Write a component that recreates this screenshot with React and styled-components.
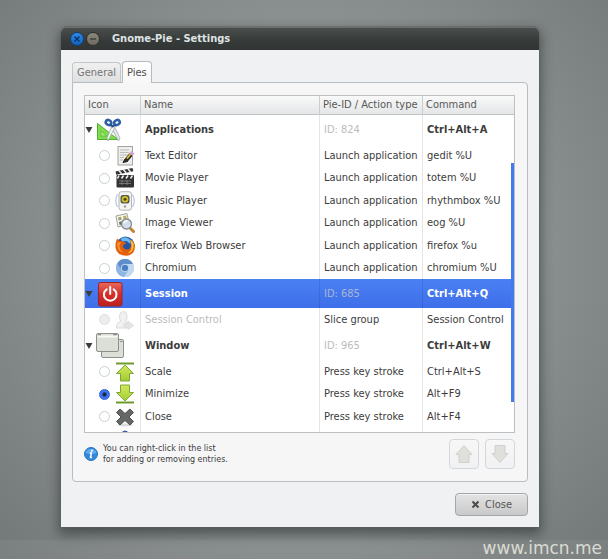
import React, { useState } from 'react';
import styled, { createGlobalStyle } from 'styled-components';

const GlobalStyle = createGlobalStyle`
  * {
    box-sizing: border-box;
  }

  body {
    margin: 0;
    font-family: 'DejaVu Sans Condensed', 'Noto Sans', sans-serif;
    font-size: 11px;
    line-height: 14px;
    color: #3c3c3c;
  }

  button {
    font: inherit;
    color: inherit;
    padding: 0;
  }
`;

const Desktop = styled.div`
  position: relative;
  display: flex;
  height: 100vh;
  min-height: 480px;
  padding: 27px 69px 32px 61px;
  background:
    linear-gradient(transparent calc(100% - 20px), rgba(255, 255, 255, 0.06) calc(100% - 18px)),
    radial-gradient(ellipse at 50% 45%, #989c9c 0%, #8a8f8f 55%, #727777 100%);
`;

const Window = styled.main`
  flex: 1;
  min-width: 0;
  display: flex;
  flex-direction: column;
  border-radius: 5px 5px 0 0;
  background: #f0f1f2;
  box-shadow: 0 0 0 1px rgba(90, 95, 95, 0.5), 0 5px 12px 2px rgba(25, 30, 30, 0.5);
`;

const TitleBar = styled.header`
  display: flex;
  align-items: center;
  height: 23px;
  padding: 0 9px;
  gap: 2px;
  border-radius: 5px 5px 0 0;
  background: linear-gradient(#4b504e, #363b39 60%, #303533);
  box-shadow: inset 0 1px 0 #6a6f6d;
`;

const WindowButton = styled.button`
  display: flex;
  width: 14px;
  height: 14px;
  border: 1px solid ${props => (props.$close ? '#123f77' : '#2f302b')};
  border-radius: 50%;
  background: ${props => (props.$close ? 'linear-gradient(#2f8ae6, #1163bd)' : 'linear-gradient(#8d887b, #6c695f)')};
`;

const Title = styled.h1`
  margin: 0 0 0 10px;
  font-size: 11px;
  font-weight: 700;
  color: #dfe3e3;
`;

const Content = styled.div`
  flex: 1;
  min-height: 0;
  display: flex;
  flex-direction: column;
  padding: 11px;
`;

const TabList = styled.div`
  display: flex;
  align-items: flex-end;
  gap: 1px;
  z-index: 1;
`;

const Tab = styled.button`
  height: ${props => (props.$active ? '22px' : '20px')};
  margin-bottom: ${props => (props.$active ? '-1px' : '0')};
  padding: 0 4px;
  border: 1px solid ${props => (props.$active ? '#b4babe' : '#c3c7ca')};
  border-bottom: 0;
  border-radius: 4px 4px 0 0;
  background: ${props => (props.$active ? 'linear-gradient(#ffffff, #f7f7f7)' : 'linear-gradient(#f0f0f0, #dfe0e1)')};
  color: ${props => (props.$active ? '#4c4c4c' : '#747474')};
`;

const Panel = styled.section`
  flex: 1;
  min-height: 0;
  display: flex;
  flex-direction: column;
  padding: 12px 12px 12px 11px;
  border: 1px solid #b7bdc1;
  border-radius: 0 4px 4px 4px;
  background: #f6f6f6;
`;

const ListFrame = styled.div`
  position: relative;
  flex: 1;
  min-height: 0;
  overflow: hidden;
  border: 1px solid #bcc0c3;
  background: #fff;
`;

const ScrollThumb = styled.div`
  position: absolute;
  top: 20%;
  right: 0;
  width: 3px;
  height: 71%;
  background: #4479f2;
`;

const Table = styled.table`
  width: 100%;
  table-layout: fixed;
  border-collapse: separate;
  border-spacing: 0;
`;

const Col = styled.col`
  width: ${props => props.$width};
`;

const HeadCell = styled.th`
  height: 19px;
  padding: 0 2px 0 3px;
  border-right: 1px solid #cbced0;
  border-bottom: 1px solid #bfc3c6;
  background: linear-gradient(#f9f9f9, #e4e6e7);
  color: #585858;
  font-weight: 400;
  text-align: left;
  white-space: nowrap;

  &:last-child {
    border-right: 0;
  }
`;

const Cell = styled.td`
  padding: 0 2px 0 4px;
  border-right: 1px solid rgba(0, 0, 0, 0.1);
  white-space: nowrap;
  color: ${props => (props.$faded ? '#bcbcbc' : 'inherit')};

  &:last-child {
    border-right: 0;
  }
`;

const IconCell = styled(Cell)`
  padding: 0;
`;

const GroupRow = styled.tr`
  height: 29px;
  font-weight: 700;
  color: ${props => (props.$selected ? '#fff' : 'inherit')};
  background: ${props => (props.$selected ? 'linear-gradient(#4a80f4, #3e6fe9)' : 'none')};

  ${Cell}:nth-child(3) {
    font-weight: 400;
    color: ${props => (props.$selected ? '#a9b6d0' : '#bcbcbc')};
  }
`;

const ItemRow = styled.tr`
  height: 22px;

  &:nth-child(even) {
    height: 23px;
  }
`;

const IconBox = styled.div`
  display: flex;
  align-items: center;
  height: ${props => (props.$group ? '28px' : '22px')};
  gap: ${props => (props.$group ? '3px' : '5px')};
  padding-left: ${props => (props.$group ? '0' : '14px')};

  svg {
    flex: none;
    display: block;
  }
`;

const Expander = styled.button`
  display: flex;
  width: 8px;
  border: 0;
  background: none;
`;

const Radio = styled.input`
  appearance: none;
  flex: none;
  width: 11px;
  height: 11px;
  margin: 0;
  border: 1px solid #c9cfcf;
  border-radius: 50%;
  background: #fff;

  &:disabled {
    border-color: #dedfdf;
    background: #ededed;
  }

  &:checked {
    border-color: #2c5fd8;
    background: radial-gradient(circle, #16233f 0 1px, #3f74ee 3px);
  }
`;

const PanelFooter = styled.div`
  display: flex;
  align-items: center;
  gap: 6px;
  padding-top: 6px;
`;

const Hint = styled.p`
  flex: 1;
  display: flex;
  align-items: center;
  gap: 5px;
  margin: 0;
  font-family: 'DejaVu Sans', sans-serif;
  font-size: 8px;
  line-height: 11px;
`;

const MoveButton = styled.button`
  display: flex;
  align-items: center;
  justify-content: center;
  width: 30px;
  height: 30px;
  border: 1px solid #d3d7da;
  border-radius: 4px;
  background: linear-gradient(#f7f7f7, #f0f1f2);
`;

const Actions = styled.div`
  display: flex;
  justify-content: flex-end;
  padding-top: 11px;
`;

const CloseButton = styled.button`
  display: flex;
  align-items: center;
  justify-content: center;
  gap: 5px;
  width: 73px;
  height: 23px;
  border: 1px solid #a3a6a8;
  border-radius: 4px;
  background: linear-gradient(#e3e3e3, #c9c9c9);
  box-shadow: inset 0 1px 0 #f2f2f2;
  color: #555;
`;

const Watermark = styled.div`
  position: absolute;
  right: 6px;
  bottom: 0;
  font-family: 'DejaVu Sans', sans-serif;
  font-size: 17px;
  line-height: 22px;
  color: #dadcd3;
`;

const ApplicationsIcon = () => (
  <svg width="28" height="24" viewBox="0 0 28 24">
    <path d="M1.5 5.500V21.500H22z" fill="#7fdb4f" stroke="#4fae2c" />
    <path d="M5 13v5h6z" fill="#a6ef7c" stroke="#55b531" strokeWidth=".7" />
    <path d="M14.500 8l3-1 6.500 13-1.500 3z" fill="#e6e8ea" stroke="#989da1" strokeWidth=".7" />
    <path d="M19.500 8l-3-1-5.500 13 1 3z" fill="#f7f8f8" stroke="#989da1" strokeWidth=".7" />
    <g fill="none" stroke="#2d5fa6" strokeWidth="2.600">
      <ellipse cx="12.500" cy="4.500" rx="2.800" ry="2.400" transform="rotate(25 12.500 4.500)" />
      <ellipse cx="21" cy="4.500" rx="2.800" ry="2.400" transform="rotate(-25 21 4.500)" />
    </g>
    <path d="M14.500 6.500l2.300 2 2.300-2" fill="none" stroke="#244f8b" strokeWidth="2" />
  </svg>
);

const SessionIcon = () => (
  <svg width="28" height="26" viewBox="0 0 28 26">
    <defs>
      <linearGradient id="session" x1="0" y1="0" x2="0" y2="1">
        <stop offset="0" stopColor="#e8685c" />
        <stop offset=".5" stopColor="#d3302a" />
        <stop offset="1" stopColor="#bd1f1f" />
      </linearGradient>
    </defs>
    <rect x="2.500" y="1.500" width="23.500" height="23.500" rx="2" fill="url(#session)" stroke="#9c2226" />
    <path d="M10.700 8.300a6.300 6.300 0 1 0 7 0M14.200 6v7" fill="none" stroke="#fff" strokeWidth="2" strokeLinecap="round" />
  </svg>
);

const WindowIcon = () => (
  <svg width="29" height="27" viewBox="0 0 29 27">
    <g fill="#dcded8" stroke="#8e918b">
      <rect x="5.500" y="7.500" width="22" height="18" rx="1.500" />
      <rect x=".5" y="1.500" width="22" height="18" rx="1.500" />
    </g>
    <path d="M1.500 4.500h20" stroke="#f8f8f6" strokeWidth="2" />
    <path d="M2 2.700h3M17 2.700h4" stroke="#7d807a" />
    <path d="M24 9.500h2.500" stroke="#8e918b" />
  </svg>
);

const EditorIcon = () => (
  <svg width="20" height="20" viewBox="0 0 20 20">
    <rect x="3" y=".5" width="14.500" height="18.500" fill="#eeeeec" stroke="#a3a5a1" />
    <path d="M5 4h9M5 6.500h9M5 9h8M5 11.500h4M5 14h3" stroke="#bbbdb9" />
    <path d="M8 16.500l2-3.500 2.500 2.500z" fill="#333" stroke="#222" />
    <path d="M11 14.500l5-6" stroke="#2e2c22" strokeWidth="4" />
    <path d="M12 12.500l3.500-4.200" stroke="#e8c83a" strokeWidth="1.600" />
    <path d="M16 8.500l2-2.300" stroke="#d7a0cd" strokeWidth="4" />
  </svg>
);

const MovieIcon = () => (
  <svg width="20" height="20" viewBox="0 0 20 20">
    <path d="M.500 3.500L17.500 0l.8 3.200L1.300 6.700z" fill="#303030" />
    <path d="M4 2.700l2.600 3M8.500 1.800l2.600 3M13 1l2.600 3" stroke="#eee" strokeWidth="1.600" />
    <rect x="1.500" y="7" width="17.500" height="12.500" rx="1" fill="#333" />
    <path d="M4 7.500l-1.500 3M8.500 7.500l-2 3M13 7.500l-2 3M17.500 7.500l-2 3" stroke="#eee" strokeWidth="1.600" />
    <path d="M4 13h12M4 15.500h12M7 12v5M12 12v5" stroke="#858585" strokeWidth=".8" />
  </svg>
);

const MusicIcon = () => (
  <svg width="20" height="20" viewBox="0 0 20 20">
    <path d="M2.500 3.500Q-1 9.500 2.500 16M17.500 3.500q3.500 6 0 12.500" fill="none" stroke="#b4c9e2" strokeWidth="1.300" />
    <rect x="4" y=".7" width="12.500" height="18.500" rx="2.500" fill="#f3f4f2" stroke="#b3b6b2" />
    <rect x="5.500" y="4" width="9" height="8.500" rx="2.500" fill="#55554c" />
    <circle cx="10" cy="8.200" r="3.300" fill="#d2c02a" />
    <circle cx="10" cy="8.200" r="1.500" fill="#4c4717" />
    <circle cx="10" cy="15.500" r="1.200" fill="#9a9c98" />
  </svg>
);

const ImageIcon = () => (
  <svg width="20" height="20" viewBox="0 0 20 20">
    <path d="M1 3l11-2.500 2 10L3 14z" fill="#f5f5f0" stroke="#a1a39a" />
    <path d="M3 4.500l3-.7.7 3-3 .8z" fill="#93a56c" />
    <path d="M8 3.300l3-.7.7 3-3 .8z" fill="#c2aa55" />
    <path d="M4 9l3-.8.700 3-3 .8z" fill="#5e6e4c" />
    <path d="M15.500 15.500l3 3" stroke="#bd8637" strokeWidth="3" strokeLinecap="round" />
    <circle cx="11.500" cy="11" r="5" fill="#d3deeb" fillOpacity=".9" stroke="#868b8e" strokeWidth="1.300" />
    <path d="M9 10q1-2.500 3.500-2" fill="none" stroke="#fff" strokeWidth="1.200" />
  </svg>
);

const FirefoxIcon = () => (
  <svg width="20" height="20" viewBox="0 0 20 20">
    <circle cx="10.500" cy="9.500" r="9" fill="#2455a4" />
    <path d="M5.500 3Q10-.5 14.500 3q1.500 2 1 5l-4-3-4 .5z" fill="#6cb8ee" />
    <path d="M1 5.500l1-3L4.500 5q2.500-.7 4 1l2.500.5-.5 1.500-2.500 1q-.5 3.500 3 4.500 4 .5 5-3.500.5-4-1-6.500 5 2 5 7 0 8.500-8.500 9.200Q1.500 19.500.5 11.500q-.3-3.500.5-6z" fill="#e0600f" />
    <path d="M15 3.500q5 3 3.500 8.500-1.500 5-6.500 5.500 4-2 4.500-6 .3-4-1.500-8z" fill="#f9c337" />
    <path d="M2 7q2-1.500 4-.7L4.500 9q-.5 5 4 7.500-5-.5-6-5z" fill="#f59324" />
  </svg>
);

const ChromiumIcon = () => (
  <svg width="20" height="20" viewBox="0 0 20 20">
    <circle cx="10" cy="10" r="9" fill="#86b0e0" />
    <path d="M10 10L2.200 5.500A9 9 0 0 0 9 19l4-7z" fill="#8db6e4" />
    <path d="M10 6h8a9 9 0 0 1-9 13l4.500-7z" fill="#c3d9f1" />
    <path d="M2.200 5.500A9 9 0 0 1 18 6h-8L6 11z" fill="#5f8fca" />
    <circle cx="10" cy="10" r="3.800" fill="#4a7fc4" stroke="#c9dcf2" />
  </svg>
);

const UserIcon = () => (
  <svg width="20" height="20" viewBox="0 0 20 20">
    <g fill="#f1f1f1" stroke="#dcdcdc">
      <path d="M1.500 18q-.5-5.500 4.500-7Q4 9 4.500 5.500 5 1.500 8.500 1.500T12 5.500Q12.500 9 10.500 11q4 1 4 7z" />
      <path d="M9 13.500h4v-2.500l5.500 4.500-5.500 4v-2.500H9z" fill="#e4e4e4" />
    </g>
  </svg>
);

const GreenArrow = ({ down }) => (
  <svg width="20" height="20" viewBox="0 0 20 20">
    <defs>
      <linearGradient id={down ? 'arrowDown' : 'arrowUp'} x1="0" y1="0" x2="0" y2="1">
        <stop offset="0" stopColor="#d4e95c" />
        <stop offset="1" stopColor="#a0cc33" />
      </linearGradient>
    </defs>
    {down ? (
      <path d="M5.500 1h9v7.500h4L10 17 1.500 8.500h4z" fill="url(#arrowDown)" stroke="#7fa836" />
    ) : (
      <path d="M5.500 19h9v-7.500h4L10 3l-8.500 8.500h4z" fill="url(#arrowUp)" stroke="#7fa836" />
    )}
    <path d={down ? 'M1 18.500h18' : 'M1 1.500h18'} stroke="#6c9c2c" strokeWidth="2" />
  </svg>
);

const CrossIcon = () => (
  <svg width="20" height="20" viewBox="0 0 20 20">
    <ellipse cx="10" cy="18" rx="8" ry="1.500" fill="#dcdcdc" />
    <path d="M5 2l5 4.500L15 2l3.500 3.500-4.500 4.500 4.500 4.500-3.500 3.500-5-4.500L5 18l-3.500-3.500L6 10 1.500 5.500z" fill="#646765" stroke="#4f514f" />
  </svg>
);

const BlueIcon = () => (
  <svg width="20" height="20" viewBox="0 0 20 20">
    <circle cx="10" cy="5" r="3" fill="#4c84cc" stroke="#28569a" />
  </svg>
);

const InfoIcon = () => (
  <svg width="14" height="14" viewBox="0 0 14 14">
    <circle cx="7" cy="7" r="6.500" fill="#3289dc" stroke="#2875c4" />
    <path d="M1.500 6a5.600 5 0 0 1 11 0q-5 2-11 0z" fill="#5fabee" />
    <path d="M8 3.300l-.2 .6" stroke="#fff" strokeWidth="1.800" strokeLinecap="round" />
    <path d="M5.800 6h1.500L6.500 10.500H8" fill="none" stroke="#fff" strokeWidth="1.500" />
  </svg>
);

const GreyArrow = ({ down }) => (
  <svg width="18" height="20" viewBox="0 0 18 20">
    <path
      d={down ? 'M4 1.500h10v8h3L9 18.500 1 9.500h3z' : 'M4 18.500h10v-8h3L9 1.500 1 10.500h3z'}
      fill="#dfdfdb"
      stroke="#d0d0cc"
    />
  </svg>
);

const groups = [
  {
    name: 'Applications',
    id: 'ID: 824',
    command: 'Ctrl+Alt+A',
    icon: <ApplicationsIcon />,
    items: [
      { name: 'Text Editor', type: 'Launch application', command: 'gedit %U', icon: <EditorIcon /> },
      { name: 'Movie Player', type: 'Launch application', command: 'totem %U', icon: <MovieIcon /> },
      { name: 'Music Player', type: 'Launch application', command: 'rhythmbox %U', icon: <MusicIcon /> },
      { name: 'Image Viewer', type: 'Launch application', command: 'eog %U', icon: <ImageIcon /> },
      { name: 'Firefox Web Browser', type: 'Launch application', command: 'firefox %u', icon: <FirefoxIcon /> },
      { name: 'Chromium', type: 'Launch application', command: 'chromium %U', icon: <ChromiumIcon /> },
    ],
  },
  {
    name: 'Session',
    id: 'ID: 685',
    command: 'Ctrl+Alt+Q',
    icon: <SessionIcon />,
    items: [
      { name: 'Session Control', type: 'Slice group', command: 'Session Control', icon: <UserIcon />, disabled: true },
    ],
  },
  {
    name: 'Window',
    id: 'ID: 965',
    command: 'Ctrl+Alt+W',
    icon: <WindowIcon />,
    items: [
      { name: 'Scale', type: 'Press key stroke', command: 'Ctrl+Alt+S', icon: <GreenArrow /> },
      { name: 'Minimize', type: 'Press key stroke', command: 'Alt+F9', icon: <GreenArrow down /> },
      { name: 'Close', type: 'Press key stroke', command: 'Alt+F4', icon: <CrossIcon /> },
      { name: '', type: '', command: '', icon: <BlueIcon /> },
    ],
  },
];

const App = () => {
  const [tab, setTab] = useState('Pies');
  const [selected, setSelected] = useState('Session');
  const [quick, setQuick] = useState('Minimize');

  return (
    <>
      <GlobalStyle />
      <Desktop>
        <Window>
          <TitleBar>
            <WindowButton $close aria-label="Close window">
              <svg width="12" height="12" viewBox="0 0 12 12">
                <path d="M3.500 3.500l5 5M8.500 3.500l-5 5" stroke="#0c2e5c" strokeWidth="1.200" />
              </svg>
            </WindowButton>
            <WindowButton aria-label="Minimize window">
              <svg width="12" height="12" viewBox="0 0 12 12">
                <path d="M3 6h6" stroke="#35342f" strokeWidth="1.200" />
              </svg>
            </WindowButton>
            <Title>Gnome-Pie - Settings</Title>
          </TitleBar>

          <Content>
            <TabList role="tablist">
              {['General', 'Pies'].map(name => (
                <Tab
                  key={name}
                  role="tab"
                  aria-selected={tab === name}
                  $active={tab === name}
                  onClick={() => setTab(name)}
                >
                  {name}
                </Tab>
              ))}
            </TabList>

            <Panel>
              <ListFrame>
                <Table>
                  <colgroup>
                    <Col $width="56px" />
                    <Col $width="179px" />
                    <Col $width="103px" />
                    <Col $width="auto" />
                  </colgroup>
                  <thead>
                    <tr>
                      <HeadCell>Icon</HeadCell>
                      <HeadCell>Name</HeadCell>
                      <HeadCell>Pie-ID / Action type</HeadCell>
                      <HeadCell>Command</HeadCell>
                    </tr>
                  </thead>
                  {groups.map(group => (
                    <tbody key={group.name}>
                      <GroupRow $selected={selected === group.name} onClick={() => setSelected(group.name)}>
                        <IconCell>
                          <IconBox $group>
                            <Expander aria-label={`Collapse ${group.name}`}>
                              <svg width="8" height="8" viewBox="0 0 8 8">
                                <path d="M.5 1h7L4 7z" fill="#3c3c3c" />
                              </svg>
                            </Expander>
                            {group.icon}
                          </IconBox>
                        </IconCell>
                        <Cell>{group.name}</Cell>
                        <Cell>{group.id}</Cell>
                        <Cell>{group.command}</Cell>
                      </GroupRow>
                      {group.items.map(item => (
                        <ItemRow key={item.name}>
                          <IconCell>
                            <IconBox>
                              <Radio
                                type="radio"
                                name="quick-action"
                                aria-label={item.name || 'Next entry'}
                                disabled={item.disabled}
                                checked={quick === item.name}
                                onChange={() => setQuick(item.name)}
                              />
                              {item.icon}
                            </IconBox>
                          </IconCell>
                          <Cell $faded={item.disabled}>{item.name}</Cell>
                          <Cell>{item.type}</Cell>
                          <Cell>{item.command}</Cell>
                        </ItemRow>
                      ))}
                    </tbody>
                  ))}
                </Table>
                <ScrollThumb />
              </ListFrame>

              <PanelFooter>
                <Hint>
                  <InfoIcon />
                  <span>
                    You can right-click in the list
                    <br />
                    for adding or removing entries.
                  </span>
                </Hint>
                <MoveButton aria-label="Move up" disabled>
                  <GreyArrow />
                </MoveButton>
                <MoveButton aria-label="Move down" disabled>
                  <GreyArrow down />
                </MoveButton>
              </PanelFooter>
            </Panel>

            <Actions>
              <CloseButton>
                <svg width="9" height="9" viewBox="0 0 9 9">
                  <path d="M1.500 1.500l6 6M7.500 1.500l-6 6" stroke="#4a4a4a" strokeWidth="2" />
                </svg>
                Close
              </CloseButton>
            </Actions>
          </Content>
        </Window>
        <Watermark>www.imcn.me</Watermark>
      </Desktop>
    </>
  );
};

export default App;
